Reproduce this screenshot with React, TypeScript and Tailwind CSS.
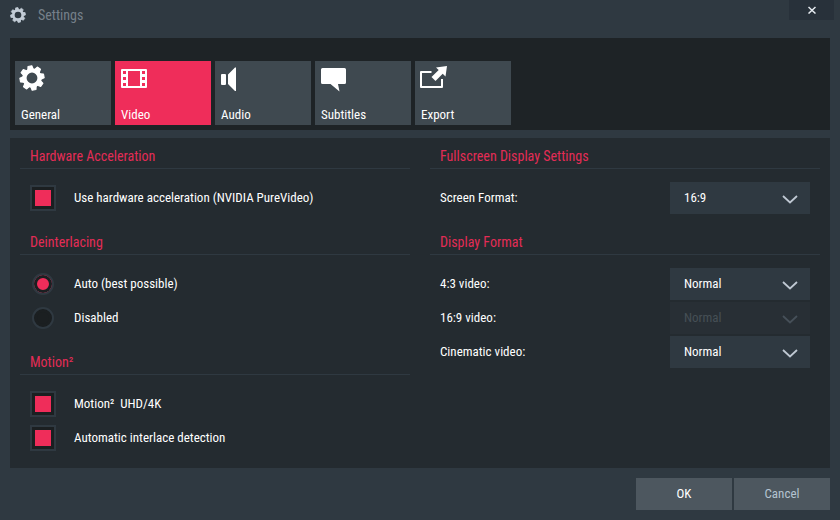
import { ReactNode, SVGProps, useState } from "react";

type TabId = "general" | "video" | "audio" | "subtitles" | "export";

type TabConfig = {
  icon: ReactNode;
  id: TabId;
  label: string;
};

const tabs: TabConfig[] = [
  { id: "general", label: "General", icon: <GearIcon className="-ml-0.5 h-6.5 w-6.5" /> },
  { id: "video", label: "Video", icon: <FilmIcon /> },
  { id: "audio", label: "Audio", icon: <SpeakerIcon /> },
  { id: "subtitles", label: "Subtitles", icon: <BubbleIcon /> },
  { id: "export", label: "Export", icon: <ExportIcon /> },
];

const screenFormats = ["16:9", "16:10", "4:3"];
const displayFormats = ["Normal", "Stretched", "Zoomed"];

export default function SettingsWindow() {
  const [activeTab, setActiveTab] = useState<TabId>("video");

  return (
    <main className="flex min-h-screen flex-col bg-[#2f3941] font-['Roboto_Condensed','Roboto',sans-serif] text-[13px] leading-4 text-white">
      <header className="flex h-[38px] items-start justify-between pl-2.5">
        <div className="flex items-center gap-3 pt-1">
          <GearIcon className="h-4 w-4 text-[#c3ccd6]" />
          <h1 className="text-sm leading-[22px] text-[#76808a]">Settings</h1>
        </div>
        <button
          aria-label="Close"
          className="mr-1.5 flex h-5 w-[45px] items-center justify-center bg-[#28313a]"
          type="button"
        >
          <CloseIcon />
        </button>
      </header>

      <nav className="mx-2.5 flex gap-1 bg-[#1e2326] px-[5px] pt-[23px] pb-[5px]">
        {tabs.map((tab) => (
          <button
            className={`flex h-16 w-24 flex-col items-start justify-between px-1.5 pt-1 pb-0.5 text-left ${
              activeTab === tab.id ? "bg-[#ef2d5a]" : "bg-[#3f4950]"
            }`}
            key={tab.id}
            onClick={() => setActiveTab(tab.id)}
            type="button"
          >
            {tab.icon}
            <span>{tab.label}</span>
          </button>
        ))}
      </nav>

      <div className="mx-2.5 mt-2 grid flex-1 grid-cols-2 gap-5 bg-[#242b30] px-2.5 pb-1">
        <div>
          <Section title="Hardware Acceleration">
            <CheckRow label="Use hardware acceleration (NVIDIA PureVideo)" />
          </Section>
          <Section title="Deinterlacing">
            <RadioRow defaultChecked label="Auto (best possible)" />
            <RadioRow label="Disabled" />
          </Section>
          <Section title="Motion²">
            <CheckRow label={"Motion²\u00a0 UHD/4K"} />
            <CheckRow label="Automatic interlace detection" />
          </Section>
        </div>
        <div>
          <Section title="Fullscreen Display Settings">
            <SelectRow id="screen" label="Screen Format:" options={screenFormats} />
          </Section>
          <Section title="Display Format">
            <SelectRow id="standard" label="4:3 video:" options={displayFormats} />
            <SelectRow disabled id="wide" label="16:9 video:" options={displayFormats} />
            <SelectRow id="cinematic" label="Cinematic video:" options={displayFormats} />
          </Section>
        </div>
      </div>

      <footer className="flex justify-end gap-0.5 p-2.5">
        <button className="h-8 w-24 bg-[#4d575f]" type="button">
          OK
        </button>
        <button className="h-8 w-24 bg-[#4d575f] text-[#b4c3d0]" type="button">
          Cancel
        </button>
      </footer>
    </main>
  );
}

function Section({ children, title }: { children: ReactNode; title: string }) {
  return (
    <section className="pb-[9px]">
      <h2 className="border-b border-[#2f3941] px-2.5 pt-2.5 pb-1 text-sm leading-4 text-[#e32c56]">
        {title}
      </h2>
      <div className="px-2.5 pt-3">{children}</div>
    </section>
  );
}

function CheckRow({ label }: { label: string }) {
  return (
    <label className="flex h-[34px] items-center gap-[18px]">
      <input
        className="h-[26px] w-[26px] appearance-none border-2 border-[#2f3941] bg-[#1b1f21] shadow-[inset_0_0_0_3px_#1b1f21] checked:bg-[#ef2d5a]"
        defaultChecked
        type="checkbox"
      />
      {label}
    </label>
  );
}

function RadioRow({
  defaultChecked,
  label,
}: {
  defaultChecked?: boolean;
  label: string;
}) {
  return (
    <label className="flex h-[34px] items-center gap-5 pl-0.5">
      <input
        className="h-[22px] w-[22px] appearance-none rounded-full border-2 border-[#2f3941] bg-[#1b1f21] shadow-[inset_0_0_0_3px_#1b1f21] checked:bg-[#ef2d5a]"
        defaultChecked={defaultChecked}
        name="deinterlacing"
        type="radio"
      />
      {label}
    </label>
  );
}

function SelectRow({
  disabled,
  id,
  label,
  options,
}: {
  disabled?: boolean;
  id: string;
  label: string;
  options: string[];
}) {
  return (
    <div className="flex h-[34px] items-center justify-between">
      <label htmlFor={id}>{label}</label>
      <div className="relative">
        <select
          className="h-8 w-[140px] appearance-none bg-[#2f3941] px-3.5 disabled:bg-[#282f35] disabled:text-[#465056] disabled:opacity-100"
          disabled={disabled}
          id={id}
        >
          {options.map((option) => (
            <option key={option}>{option}</option>
          ))}
        </select>
        <svg
          aria-hidden="true"
          className={`pointer-events-none absolute top-3 right-3 h-2.5 w-4 ${
            disabled ? "text-[#465059]" : "text-[#bfc8d2]"
          }`}
          fill="none"
          stroke="currentColor"
          strokeWidth="1.8"
          viewBox="0 0 16 10"
        >
          <path d="M1 2 8 8.500 15 2" />
        </svg>
      </div>
    </div>
  );
}

function GearIcon(props: SVGProps<SVGSVGElement>) {
  return (
    <svg aria-hidden="true" fill="none" stroke="currentColor" viewBox="0 0 24 24" {...props}>
      <circle cx="12" cy="12" r="7" strokeWidth="4" />
      <g strokeLinejoin="round" strokeWidth="1" fill="currentColor">
        {[-10, 35, 80, 125, 170, 215, 260, 305].map((angle) => (
          <path d="M9.500 4 10.200 0.900h3.600L14.500 4Z" key={angle} transform={`rotate(${angle} 12 12)`} />
        ))}
      </g>
    </svg>
  );
}

function FilmIcon() {
  return (
    <svg aria-hidden="true" className="mt-1 h-[19px] w-[26px]" fill="currentColor" viewBox="0 0 26 19">
      <path
        d="M1 0h24a1 1 0 0 1 1 1v17a1 1 0 0 1-1 1H1a1 1 0 0 1-1-1V1a1 1 0 0 1 1-1ZM7 2v15h12V2ZM2 2v3h3V2Zm0 6v3h3V8Zm0 6v3h3v-3ZM21 2v3h3V2Zm0 6v3h3V8Zm0 6v3h3v-3Z"
        fillRule="evenodd"
      />
    </svg>
  );
}

function SpeakerIcon() {
  return (
    <svg aria-hidden="true" className="mt-0.5 h-6 w-4" fill="currentColor" viewBox="0 0 16 24">
      <path d="M1 7h3q1 0 1 1v9q0 1-1 1H1q-1 0-1-1V8q0-1 1-1ZM7 7.500 14 0.500h1v23.500h-1l-7-7Z" />
    </svg>
  );
}

function BubbleIcon() {
  return (
    <svg aria-hidden="true" className="mt-[3px] h-6 w-[26px]" fill="currentColor" viewBox="0 0 26 24">
      <path d="M1.500 0h22a1.500 1.500 0 0 1 1.500 1.500v13a1.500 1.500 0 0 1-1.500 1.500H17l1.500 7.500L9.500 16h-8A1.500 1.500 0 0 1 0 14.500v-13A1.500 1.500 0 0 1 1.500 0Z" />
    </svg>
  );
}

function ExportIcon() {
  return (
    <svg aria-hidden="true" className="-ml-px h-6 w-7" fill="currentColor" viewBox="0 0 28 24">
      <path d="M11.500 7H1v15h21v-8" fill="none" stroke="currentColor" strokeLinejoin="round" strokeWidth="2" />
      <path d="M27 1 25.500 11.500l-2.800-2.700-7.200 7.200-4-4 7.200-7-2.700-2.500Z" />
    </svg>
  );
}

function CloseIcon() {
  return (
    <svg aria-hidden="true" className="h-2 w-2" stroke="#e6ebf0" strokeWidth="1.500" viewBox="0 0 8 8">
      <path d="m0.500 1 7 6.500M7.500 1l-7 6.500" />
    </svg>
  );
}
